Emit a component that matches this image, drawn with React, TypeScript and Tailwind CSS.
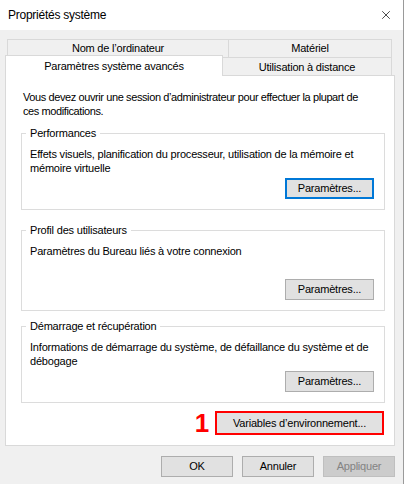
import { X } from 'lucide-react'

interface GroupProps {
  title: string
  text: string
  focused?: boolean
  textHeight: string
  gap: string
  className?: string
}

function WinButton({ label, focused, disabled, className }: { label: string; focused?: boolean; disabled?: boolean; className?: string }) {
  if (disabled) {
    return (
      <div className={`flex items-center justify-center h-[21px] border border-[#bfbfbf] bg-[#cccccc] text-[#838383] ${className ?? ''}`}>
        {label}
      </div>
    )
  }
  return (
    <div
      className={`flex items-center justify-center h-[21px] bg-[#e1e1e1] text-black ${
        focused ? 'border-2 border-[#0078d7]' : 'border border-[#adadad]'
      } ${className ?? ''}`}
    >
      {label}
    </div>
  )
}

function Group({ title, text, focused, textHeight, gap, className }: GroupProps) {
  return (
    <fieldset className={`border border-[#dcdcdc] pl-[8px] pr-[10px] pb-[10px] ${className ?? ''}`}>
      <legend className="ml-[-4px] px-[4px] leading-[14px]">{title}</legend>
      <p className={`mt-[7px] leading-[14px] ${textHeight}`}>{text}</p>
      <div className={`flex justify-end ${gap}`}>
        <WinButton label="Paramètres..." focused={focused} className="w-[89px]" />
      </div>
    </fieldset>
  )
}

export default function App() {
  return (
    <div className="w-[404px] h-[484px] bg-[#f0f0f0] text-[11px] tracking-[-0.2px] text-black font-['Liberation_Sans',Arial,sans-serif] flex flex-col border-r border-[#9a9a9a]">
      {/* title bar */}
      <div className="h-[30px] bg-white flex items-center justify-between pl-[8px] pr-[10px]">
        <span className="text-[12px] tracking-[-0.25px]">Propriétés système</span>
        <X className="size-[14px] text-black" strokeWidth={1.2} />
      </div>

      {/* tabs */}
      <div className="pt-[9px] pl-[5px]">
        <div className="flex ml-[2px] h-[18px]">
          <div className="w-[221px] border border-r-0 border-b-0 border-[#d9d9d9] flex items-center justify-center">
            Nom de l’ordinateur
          </div>
          <div className="w-[164px] border border-b-0 border-[#d9d9d9] flex items-center justify-center">
            Matériel
          </div>
        </div>
        <div className="flex items-end mt-[-2px] h-[20px]">
          <div className="relative z-10 w-[218px] h-[21px] mb-[-1px] bg-white border border-b-0 border-[#d9d9d9] flex items-start justify-center pt-[2px]">
            Paramètres système avancés
          </div>
          <div className="w-[169px] h-[19px] mb-[-1px] border border-l-0 border-[#d9d9d9] flex items-center justify-center pt-[2px]">
            Utilisation à distance
          </div>
        </div>
      </div>

      {/* panel */}
      <div className="ml-[5px] w-[390px] h-[371px] bg-white border border-[#d9d9d9] flex flex-col pl-[15px] pr-[9px]">
        <p className="mt-[14px] ml-[2px] w-[348px] leading-[14px] tracking-[-0.4px]">
          Vous devez ouvrir une session d’administrateur pour effectuer la plupart de ces modifications.
        </p>
        <Group
          title="Performances"
          text="Effets visuels, planification du processeur, utilisation de la mémoire et mémoire virtuelle"
          focused
          textHeight="h-[28px]"
          gap="mt-[3px]"
          className="mt-[8px]"
        />
        <Group
          title="Profil des utilisateurs"
          text="Paramètres du Bureau liés à votre connexion"
          textHeight="h-[14px]"
          gap="mt-[21px]"
          className="mt-[13px]"
        />
        <Group
          title="Démarrage et récupération"
          text="Informations de démarrage du système, de défaillance du système et de débogage"
          textHeight="h-[28px]"
          gap="mt-[3px]"
          className="mt-[8px]"
        />
        <div className="flex justify-end items-center gap-[6px] mt-[7px] pr-[1px]">
          <span className="text-[red] font-bold text-[26px] leading-none">1</span>
          <div className="w-[169px] h-[24px] border-2 border-[red] bg-[#e1e1e1] flex items-center justify-center">
            Variables d’environnement...
          </div>
        </div>
      </div>

      {/* bottom buttons */}
      <div className="flex justify-end gap-[9px] mt-[10px] pr-[8px]">
        <WinButton label="OK" className="w-[72px]" />
        <WinButton label="Annuler" className="w-[72px]" />
        <WinButton label="Appliquer" disabled className="w-[72px]" />
      </div>
    </div>
  )
}
